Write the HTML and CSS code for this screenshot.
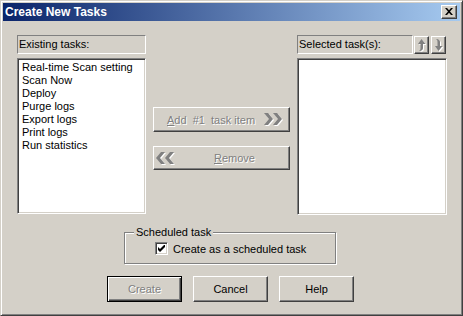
FILE: index.html
```html
<!DOCTYPE html>
<html lang="en">
<head>
    <meta charset="UTF-8">
    <title>Create New Tasks</title>
    <link rel="stylesheet" href="styles.css">
</head>
<body>

    <div class="window">
        <div class="titlebar">
            <span class="title">Create New Tasks</span>
            <div class="close raised">
                <svg width="8" height="7" viewBox="0 0 8 7">
                    <path d="M0 0h2l2 2.2L6 0h2L5 3.5 8 7H6L4 4.8 2 7H0l3-3.5z" fill="#000"/>
                </svg>
            </div>
        </div>

        <div class="content">
            <div class="columns">
                <div class="col">
                    <div class="caption">Existing tasks:</div>
                    <ul class="listbox">
                        <li>Real-time Scan setting</li>
                        <li>Scan Now</li>
                        <li>Deploy</li>
                        <li>Purge logs</li>
                        <li>Export logs</li>
                        <li>Print logs</li>
                        <li>Run statistics</li>
                    </ul>
                </div>

                <div class="col middle">
                    <div class="btn raised move add">
                        <span class="disabled"><u>A</u>dd&nbsp; #1&nbsp; task item</span>
                        <svg width="21" height="13" viewBox="0 0 21 13">
                            <path d="M1 1h4l5 6-5 6H1l5-6zM10 1h4l5 6-5 6h-4l5-6z" fill="#fff"/>
                            <path d="M0 0h4l5 6-5 6H0l5-6zM9 0h4l5 6-5 6H9l5-6z" fill="#808080"/>
                        </svg>
                    </div>
                    <div class="btn raised move remove">
                        <svg width="21" height="13" viewBox="0 0 21 13">
                            <path d="M10 1H6L1 7l5 6h4L5 7zM19 1h-4l-5 6 5 6h4l-5-6z" fill="#fff"/>
                            <path d="M9 0H5L0 6l5 6h4L4 6zM18 0h-4L9 6l5 6h4l-5-6z" fill="#808080"/>
                        </svg>
                        <span class="disabled"><u>R</u>emove</span>
                    </div>
                </div>

                <div class="col">
                    <div class="caption-row">
                        <div class="caption">Selected task(s):</div>
                        <div class="arrow raised">
                            <svg width="9" height="13" viewBox="0 0 9 13">
                                <path d="M5.5 1L9.5 6H7v4c0 1.5-1 2.5-3 3H3c1-.5 1.5-1.5 1.5-3V6H2z" fill="#fff"/>
                                <path d="M4.5 0L8.5 5H6v4c0 1.5-1 2.5-3 3H2c1-.5 1.5-1.5 1.5-3V5H1z" fill="#808080"/>
                            </svg>
                        </div>
                        <div class="arrow raised">
                            <svg width="9" height="13" viewBox="0 0 9 13">
                                <path d="M5.5 13L9.5 8H7V4C7 2.5 6 1.5 4 1H3c1 .5 1.5 1.5 1.5 3v4H2z" fill="#fff"/>
                                <path d="M4.5 12L8.5 7H6V3C6 1.5 5 .5 3 0H2c1 .5 1.5 1.5 1.5 3v4H1z" fill="#808080"/>
                            </svg>
                        </div>
                    </div>
                    <div class="listbox tall"></div>
                </div>
            </div>

            <div class="group">
                <span class="legend">Scheduled task</span>
                <label class="check-row">
                    <span class="checkbox">
                        <svg width="7" height="7" viewBox="0 0 7 7">
                            <path d="M0 2l2 2 5-5v3L2 7 0 5z" fill="#000"/>
                        </svg>
                    </span>
                    Create as a scheduled task
                </label>
            </div>

            <div class="actions">
                <div class="btn raised push default"><span class="disabled">Create</span></div>
                <div class="btn raised push">Cancel</div>
                <div class="btn raised push">Help</div>
            </div>
        </div>
    </div>

</body>
</html>
```

FILE: styles.css
```css
body {
    margin: 0;
    background: #d4d0c8;
    font-family: "Liberation Sans", Arial, sans-serif;
    font-size: 11px;
    color: #000;
}
.window {
    width: 463px;
    height: 316px;
    box-sizing: border-box;
    padding: 2px;
    background: #d4d0c8;
    border: 1px solid;
    border-color: #d4d0c8 #404040 #404040 #d4d0c8;
    box-shadow: inset 1px 1px #fff, inset -1px -1px #808080;
}
.titlebar {
    height: 18px;
    display: flex;
    align-items: center;
    justify-content: space-between;
    padding: 0 3px 0 2px;
    background: linear-gradient(to right, #0a246a, #a6caf0);
    color: #fff;
    font-size: 12px;
    font-weight: bold;
}
.raised {
    box-sizing: border-box;
    background: #d4d0c8;
    border: 1px solid;
    border-color: #fff #404040 #404040 #fff;
    box-shadow: inset -1px -1px #808080;
}
.close {
    width: 16px;
    height: 14px;
    display: flex;
    align-items: center;
    justify-content: center;
    padding: 0 1px 1px 0;
}
.content {
    padding: 14px 13px 0 14px;
}
.columns {
    display: grid;
    grid-template-columns: 129px 137px 150px;
    column-gap: 7px;
}
.caption {
    box-sizing: border-box;
    height: 19px;
    line-height: 17px;
    padding-left: 1px;
    border: 1px solid;
    border-color: #808080 #fff #fff #808080;
}
.listbox {
    box-sizing: border-box;
    height: 156px;
    margin: 4px 0 0;
    padding: 2px 0 0 4px;
    list-style: none;
    background: #fff;
    border: 1px solid;
    border-color: #808080 #fff #fff #808080;
    box-shadow: inset 1px 1px #404040, inset -1px -1px #d4d0c8;
}
.listbox li {
    line-height: 13px;
}
.listbox.tall {
    height: 157px;
}
.middle {
    padding-top: 72px;
}
.btn {
    display: flex;
    align-items: center;
}
.disabled {
    color: #808080;
    text-shadow: 1px 1px #fff;
}
.move {
    width: 137px;
}
.add {
    height: 25px;
    justify-content: space-between;
    padding: 0 4px 0 13px;
}
.remove {
    height: 24px;
    margin-top: 14px;
    padding-left: 2px;
    gap: 37px;
}
.caption-row {
    display: flex;
    align-items: flex-end;
    gap: 2px;
    padding-right: 1px;
}
.caption-row .caption {
    flex: 1;
    margin-right: -1px;
}
.arrow {
    width: 15px;
    height: 18px;
    display: flex;
    align-items: center;
    justify-content: center;
}
.group {
    position: relative;
    box-sizing: border-box;
    width: 212px;
    height: 32px;
    margin: 17px 0 0 107px;
    padding: 9px 0 0 30px;
    border: 1px solid #808080;
    box-shadow: 1px 1px #fff, inset 1px 1px #fff;
}
.legend {
    position: absolute;
    top: -7px;
    left: 9px;
    padding: 0 2px;
    line-height: 13px;
    background: #d4d0c8;
}
.check-row {
    display: flex;
    align-items: center;
    gap: 5px;
}
.checkbox {
    box-sizing: border-box;
    width: 13px;
    height: 13px;
    display: flex;
    align-items: center;
    justify-content: center;
    background: #fff;
    border: 1px solid;
    border-color: #808080 #fff #fff #808080;
    box-shadow: inset 1px 1px #404040, inset -1px -1px #d4d0c8;
}
.actions {
    display: flex;
    gap: 11px;
    margin: 12px 0 0 90px;
}
.push {
    width: 75px;
    height: 26px;
    justify-content: center;
}
.default {
    border-color: #000;
    box-shadow: inset 1px 1px #fff, inset -1px -1px #404040, inset -2px -2px #808080;
}
```
